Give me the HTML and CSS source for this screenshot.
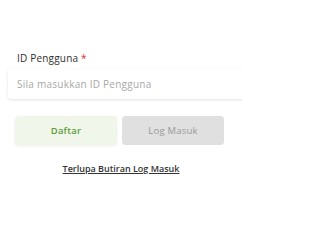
FILE: index.html
```html
<!DOCTYPE html>
<html>
<head>
<meta charset="utf-8">
<link rel="stylesheet" href="styles.css">
</head>
<body>
<div class="page">
  <div class="field">
    <label class="label">ID Pengguna <span class="req">*</span></label>
    <div class="input">Sila masukkan ID Pengguna</div>
  </div>
  <div class="buttons">
    <div class="btn btn-daftar">Daftar</div>
    <div class="btn btn-login">Log Masuk</div>
  </div>
  <div class="forgot"><span>Terlupa Butiran Log Masuk</span></div>
</div>
</body>
</html>
```
FILE: styles.css
```css
html, body { margin: 0; padding: 0; background: #fff; }
body { width: 242px; height: 208px; overflow: hidden; font-family: "Open Sans", "DejaVu Sans", sans-serif; }
.page { padding-top: 52px; }
.field { padding-left: 8px; margin-right: -20px; }
.label { display: block; padding-left: 9px; font-size: 10px; font-weight: 500; color: #2e2e2e; line-height: 13px; letter-spacing: 0.2px; }
.req { color: #d0342c; }
.input { margin-top: 4px; height: 30px; line-height: 30px; padding-left: 9px; font-size: 10px; letter-spacing: 0.25px; color: #a8a8a8; border-radius: 3px; box-shadow: 0 1px 3px rgba(0,0,0,0.12); }
.buttons { display: flex; gap: 5px; padding: 0 18px 0 15px; margin-top: 17px; }
.btn { flex: 1; height: 29px; line-height: 29px; text-align: center; font-size: 9.5px; border-radius: 4px; letter-spacing: 0.2px; }
.btn-daftar { background: #f0f6ea; color: #5f9e3a; font-weight: 600; box-shadow: 0 1px 3px rgba(0,0,0,0.08); }
.btn-login { background: #e0e0e0; color: #9a9a9a; }
.forgot { text-align: center; margin-top: 17px; font-size: 9px; font-weight: 600; color: #333; }
.forgot span { text-decoration: underline; }
```
